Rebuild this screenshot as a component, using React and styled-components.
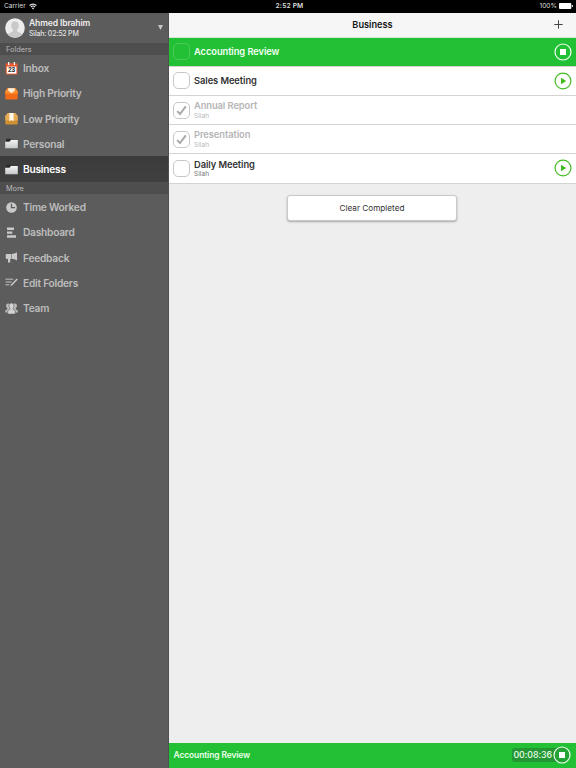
import React from 'react';
import styled, { createGlobalStyle, css } from 'styled-components';

const GlobalStyle = createGlobalStyle`
  * { box-sizing: border-box; }
  body { margin: 0; background: #eee; font-family: Inter, "Liberation Sans", sans-serif; }
  svg { display: block; flex: none; }
`;

const Screen = styled.div`
  width: 576px;
  height: 768px;
  display: flex;
  flex-direction: column;
  overflow: hidden;
`;

const StatusBar = styled.header`
  height: 12.6px;
  flex: none;
  background: #000;
  color: #dedede;
  display: grid;
  grid-template-columns: 1fr auto 1fr;
  align-items: center;
  padding: 0 3px 0 4px;
  font-size: 6.6px;
  line-height: 12px;
`;
const StatusGroup = styled.div`
  display: flex;
  align-items: center;
  gap: ${p => p.$gap}px;
  justify-content: ${p => (p.$end ? 'flex-end' : 'flex-start')};
`;
const Clock = styled.div`
  font-weight: 600;
  font-size: 6.7px;
  letter-spacing: 0.15px;
  padding-left: 2px;
`;

const Body = styled.div`
  flex: 1;
  min-height: 0;
  display: flex;
`;

const Sidebar = styled.nav`
  width: 169px;
  flex: none;
  background: #5c5c5c;
  border-right: 1px solid #505050;
`;
const Profile = styled.div`
  height: 30.4px;
  display: flex;
  align-items: center;
  padding: 0 5px;
  color: #ededed;
`;
const ProfileText = styled.div`
  flex: 1;
  padding: 1px 0 0 4px;
`;
const ProfileName = styled.div`
  font-size: 8.6px;
  font-weight: 600;
  line-height: 11px;
  letter-spacing: -0.15px;
`;
const ProfileTime = styled.div`
  font-size: 7px;
  font-weight: 500;
  line-height: 10px;
  letter-spacing: -0.2px;
  color: #e0e0e0;
`;
const SectionLabel = styled.div`
  height: ${p => p.$h}px;
  background: #4e4e4e;
  color: #b9b9b9;
  font-size: 7.3px;
  line-height: 13px;
  padding-left: 6px;
`;
const FolderRow = styled.div`
  height: 25.25px;
  display: flex;
  align-items: center;
  padding: 0.5px 0 0 5px;
  gap: 5px;
  font-size: 10.2px;
  font-weight: 600;
  letter-spacing: -0.24px;
  color: ${p => (p.$active ? '#fff' : '#bdbdbd')};
  background: ${p => (p.$active ? 'linear-gradient(#3b3b3b, #404040)' : 'transparent')};
`;

const Main = styled.main`
  flex: 1;
  display: flex;
  flex-direction: column;
  background: #eee;
`;
const TitleBar = styled.div`
  height: 25px;
  flex: none;
  background: #f6f6f6;
  display: grid;
  grid-template-columns: 1fr auto 1fr;
  align-items: center;
  border-bottom: 1px solid #d8e6d9;
`;
const Title = styled.h1`
  grid-column: 2;
  margin: 0;
  font-size: 9.2px;
  font-weight: 600;
  color: #161616;
`;
const AddButton = styled.div`
  justify-self: end;
  padding-right: 13px;
`;

const TaskRow = styled.div`
  height: 29.2px;
  flex: none;
  display: flex;
  align-items: center;
  padding: 0 4px;
  background: ${p => (p.$running ? '#22c135' : '#fff')};
  border-bottom: 1px solid #d3d3d3;
`;
const Check = styled.div`
  width: 17px;
  height: 17px;
  border-radius: 5px;
  border: 1px solid ${p => (p.$running ? '#4fcb5c' : '#c8c8c8')};
  display: flex;
  align-items: center;
  justify-content: center;
`;
const TaskText = styled.div`
  flex: 1;
  padding-left: 4px;
`;
const TaskTitle = styled.div`
  font-size: 9.3px;
  font-weight: 600;
  line-height: 11px;
  letter-spacing: -0.06px;
  color: #333;
  ${p => p.$done && css`color: #b5b5b5;`}
  ${p => p.$running && css`color: #f4fff4;`}
`;
const TaskFolder = styled.div`
  font-size: 6.6px;
  line-height: 8px;
  padding-top: 0.6px;
  color: ${p => (p.$done ? '#bbb' : '#777')};
`;

const ClearButton = styled.button`
  align-self: center;
  margin: 11.4px 1px 0 0;
  width: 170px;
  height: 26px;
  background: #fff;
  border: 1px solid #c9c9c9;
  border-radius: 3px;
  box-shadow: 0 1px 2px rgba(0, 0, 0, 0.3);
  font: 400 8.2px Inter, "Liberation Sans", sans-serif;
  color: #333;
`;

const TimerBar = styled.footer`
  height: 25.4px;
  flex: none;
  margin-top: auto;
  background: #22c135;
  color: #eaffea;
  display: flex;
  align-items: center;
  justify-content: space-between;
  padding: 0 5.5px 0 4.5px;
  font-size: 8.5px;
  font-weight: 600;
  letter-spacing: -0.14px;
`;
const Timer = styled.div`
  display: flex;
  align-items: center;
`;
const TimerValue = styled.div`
  height: 14px;
  line-height: 14px;
  width: 49px;
  margin-right: -8px;
  padding-left: 2px;
  border-radius: 3px;
  background: #249734;
  font-size: 8.8px;
  font-weight: 500;
  letter-spacing: -0.06px;
`;
const DayNumber = styled.text`
  font: 700 6.6px "Liberation Sans", Arial, sans-serif;
  letter-spacing: 0;
  text-anchor: middle;
  fill: #222;
`;

function Stop({ filled }) {
  return (
    <svg width="18" height="18" viewBox="0 0 18 18">
      <circle cx="9" cy="9" r="8" fill={filled ? '#22a333' : 'none'} stroke="#f4fff4" strokeWidth="1.2" />
      <rect x="6" y="6" width="6" height="6" fill="#fff" />
    </svg>
  );
}
function Play() {
  return (
    <svg width="18" height="18" viewBox="0 0 18 18">
      <circle cx="9" cy="9" r="7.9" fill="none" stroke="#45bd24" strokeWidth="1.2" />
      <path d="M7 5.8 12.2 9 7 12.2Z" fill="#3dbb1d" />
    </svg>
  );
}
function Tick() {
  return (
    <svg width="11" height="11" viewBox="0 0 11 11">
      <path d="M1.2 6.1 4 9 9.8 1.3" fill="none" stroke="#a9a9a9" strokeWidth="2" />
    </svg>
  );
}

const drawings = {
  inbox: (
    <>
      <rect x=".7" y="1.3" width="11.8" height="11.2" rx="1" fill="#e8592f" />
      <rect x="1.8" y="4.6" width="9.6" height="7" fill="#fff" />
      <path d="M3.7 0v3M9.4 0v3" stroke="#fff" strokeWidth="1.3" />
      <DayNumber x="6.6" y="10.4">23</DayNumber>
    </>
  ),
  high: (
    <>
      <path d="M.3 4.2 2.8 1h7.4l2.5 3.2v7.2a1 1 0 0 1-1 1H1.3a1 1 0 0 1-1-1Z" fill="#f26c18" />
      <path d="M.3 4.2 2.8 1h7.4l2.5 3.2v2.6H.3Z" fill="#ff8f2e" />
      <path d="M3.2 1.3h6.6v2.2L6.5 6.2 3.2 3.5Z" fill="#fff1df" />
    </>
  ),
  low: (
    <>
      <path d="M.3 4 2.8 1h7.4l2.5 3v7.4a1 1 0 0 1-1 1H1.3a1 1 0 0 1-1-1Z" fill="#cf8f33" />
      <path d="M.3 4 2.8 1h7.4l2.5 3v4.6H.3Z" fill="#e5ac55" />
      <path d="M4.4 1h4.2v8.2L6.5 8 4.4 9.2Z" fill="#fff8ea" />
    </>
  ),
  folder: (
    <>
      <defs>
        <linearGradient id="paper" x1="0" y1="0" x2="0" y2="1">
          <stop offset="0" stopColor="#f4f4f4" />
          <stop offset="1" stopColor="#c4c7c8" />
        </linearGradient>
      </defs>
      <path d="M1 1.8h4.2l1 1.4V5H1Z" fill="#2b2b2b" />
      <path d="M.2 4.8h4.3l1.4-1.7h6.9v8.2H.2Z" fill="url(#paper)" />
    </>
  ),
  clock: (
    <>
      <circle cx="6.5" cy="6.5" r="5.3" fill="#c9c9c9" />
      <path d="M6.5 2.7v4h3.6" fill="none" stroke="#5c5c5c" strokeWidth="1.3" />
    </>
  ),
  dashboard: <path d="M2 1.6h7v2.4H2ZM2 5.4h5.3v2.4H2ZM2 9.2h9v2.5H2Z" fill="#c9c9c9" />,
  feedback: (
    <path d="M1.5 2.9h4.8v5H5.2v3.7H3V7.9H1.5a.8.8 0 0 1-.8-.8V3.7a.8.8 0 0 1 .8-.8ZM6.8 3C8.6 2.9 10.2 2.3 12 1.3v8.2C10.2 8.5 8.6 7.9 6.8 7.8Z" fill="#c9c9c9" />
  ),
  edit: (
    <>
      <path d="M.5 3.2h7.8M.5 6h6.2M.5 8.8h4" stroke="#c0c0c0" strokeWidth="1" />
      <path d="m5.6 10.2.6-2 5.5-5.8 1.1 1-5.5 5.9Z" fill="#c9c9c9" />
    </>
  ),
  team: (
    <>
      <g fill="#bdbdbd">
        <circle cx="3.2" cy="3.8" r="2.2" />
        <circle cx="9.8" cy="3.8" r="2.2" />
        <path d="M.3 10.5V8.4l2-1.2V5h8.4v2.2l2 1.2v2.1Z" />
      </g>
      <path d="M6.5.9a2.6 2.9 0 0 0-1.6 5.2v1.2L2.7 8.6v3.5h7.6V8.6L8.1 7.3V6.1A2.6 2.9 0 0 0 6.5.9Z" fill="#d2d2d2" stroke="#5c5c5c" strokeWidth=".6" />
    </>
  ),
};
function Glyph({ name }) {
  return <svg width="13" height="13" viewBox="0 0 13 13">{drawings[name]}</svg>;
}
function Avatar() {
  return (
    <svg width="20" height="20" viewBox="0 0 20 20">
      <defs><clipPath id="face"><circle cx="10" cy="10" r="9.8" /></clipPath></defs>
      <circle cx="10" cy="10" r="9.8" fill="#ececec" />
      <path clipPath="url(#face)" d="M10 3.2a4 4.3 0 0 0-3.7 4.5c0 2 .7 3 1.7 4v1.5l-4.5 2.2L2 20h16l-1.5-4.6-4.5-2.2v-1.5c1-1 1.7-2 1.7-4A4 4.3 0 0 0 10 3.2Z" fill="#c9c9c9" />
    </svg>
  );
}

const folders = [
  ['inbox', 'Inbox'],
  ['high', 'High Priority'],
  ['low', 'Low Priority'],
  ['folder', 'Personal'],
  ['folder', 'Business', true],
];
const more = [
  ['clock', 'Time Worked'],
  ['dashboard', 'Dashboard'],
  ['feedback', 'Feedback'],
  ['edit', 'Edit Folders'],
  ['team', 'Team'],
];
const tasks = [
  { title: 'Accounting Review', running: true },
  { title: 'Sales Meeting' },
  { title: 'Annual Report', folder: 'Silah', done: true },
  { title: 'Presentation', folder: 'Silah', done: true },
  { title: 'Daily Meeting', folder: 'Silah' },
];

function FolderList({ items }) {
  return items.map(([icon, label, active]) => (
    <FolderRow key={label} $active={active}>
      <Glyph name={icon} />
      <span>{label}</span>
    </FolderRow>
  ));
}

function Task({ title, folder, done, running }) {
  return (
    <TaskRow $running={running}>
      <Check $running={running}>{done && <Tick />}</Check>
      <TaskText>
        <TaskTitle $done={done} $running={running}>{title}</TaskTitle>
        {folder && <TaskFolder $done={done}>{folder}</TaskFolder>}
      </TaskText>
      {running ? <Stop /> : !done && <Play />}
    </TaskRow>
  );
}

export default function App() {
  return (
    <Screen>
      <GlobalStyle />
      <StatusBar>
        <StatusGroup $gap={3}>
          <span>Carrier</span>
          <svg width="8" height="7" viewBox="0 0 8 7" fill="none" stroke="#e8e8e8">
            <path d="M.6 2.5a4.8 4.8 0 0 1 6.8 0M1.9 4a3 3 0 0 1 4.2 0" strokeWidth="1.1" />
            <path d="M4 6.4 2.9 5.2a1.5 1.5 0 0 1 2.2 0Z" fill="#e8e8e8" stroke="none" />
          </svg>
        </StatusGroup>
        <Clock>2:52 PM</Clock>
        <StatusGroup $gap={2} $end>
          <span>100%</span>
          <svg width="14" height="6" viewBox="0 0 14 6">
            <rect width="12.3" height="6" rx="1" fill="#fff" />
            <rect x="12.8" y="2" width="1" height="2" fill="#fff" />
          </svg>
        </StatusGroup>
      </StatusBar>
      <Body>
        <Sidebar>
          <Profile>
            <Avatar />
            <ProfileText>
              <ProfileName>Ahmed Ibrahim</ProfileName>
              <ProfileTime>Silah: 02:52 PM</ProfileTime>
            </ProfileText>
            <svg width="5" height="5" viewBox="0 0 5 5"><path d="M0 0h5L2.5 5Z" fill="#c8c8c8" /></svg>
          </Profile>
          <SectionLabel $h={12.3}>Folders</SectionLabel>
          <FolderList items={folders} />
          <SectionLabel $h={12.7}>More</SectionLabel>
          <FolderList items={more} />
        </Sidebar>
        <Main>
          <TitleBar>
            <Title>Business</Title>
            <AddButton>
              <svg width="9" height="9" viewBox="0 0 9 9"><path d="M4.5.3v8.4M.3 4.5h8.4" stroke="#444" strokeWidth="1" /></svg>
            </AddButton>
          </TitleBar>
          {tasks.map(t => <Task key={t.title} {...t} />)}
          <ClearButton>Clear Completed</ClearButton>
          <TimerBar>
            <span>Accounting Review</span>
            <Timer>
              <TimerValue>00:08:36</TimerValue>
              <Stop filled />
            </Timer>
          </TimerBar>
        </Main>
      </Body>
    </Screen>
  );
}
